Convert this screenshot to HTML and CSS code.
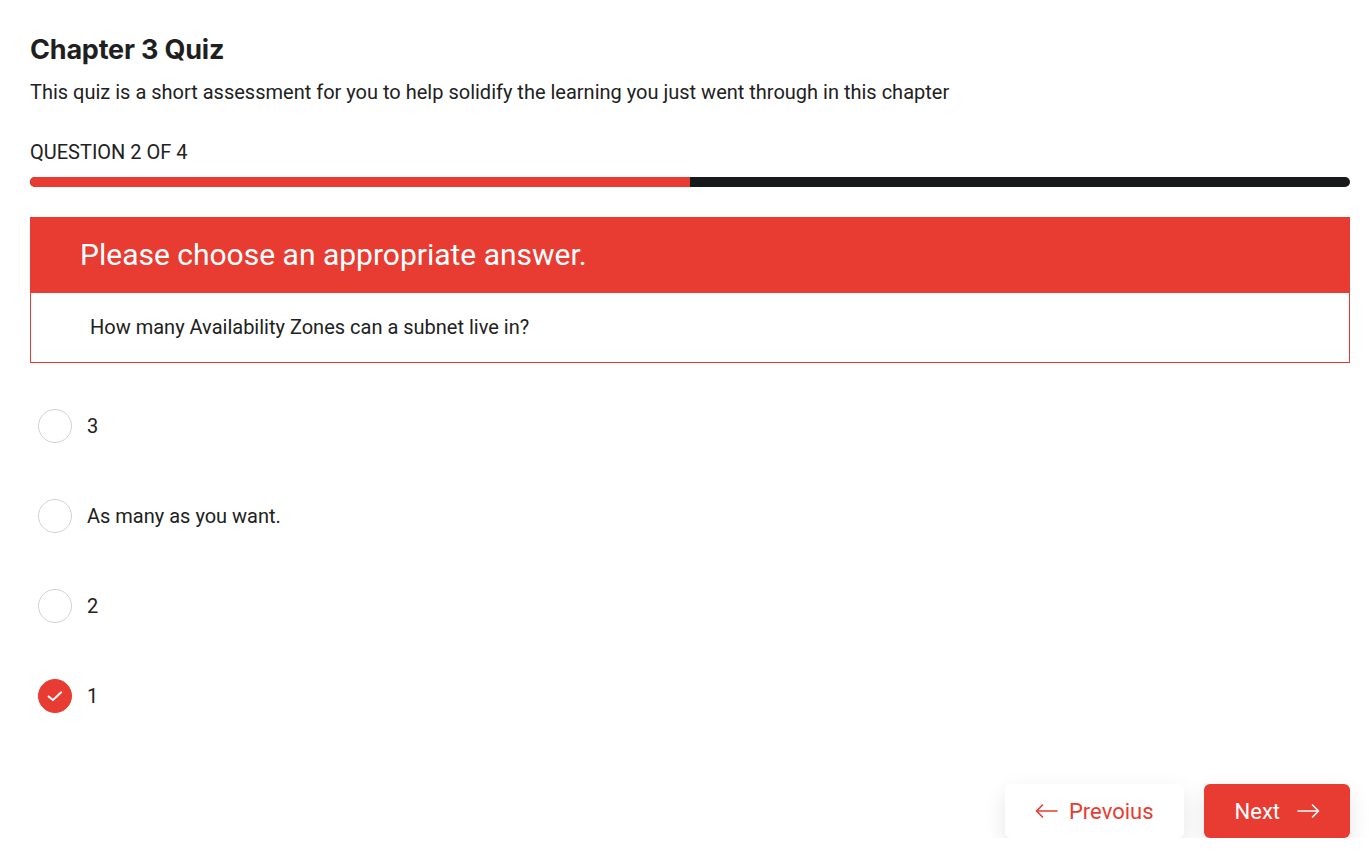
FILE: index.html
```html
<!DOCTYPE html>
<html>
<head>
<meta charset="utf-8">
<link rel="stylesheet" href="styles.css">
</head>
<body>
<div class="page">
  <h1 class="title">Chapter 3 Quiz</h1>
  <p class="subtitle">This quiz is a short assessment for you to help solidify the learning you just went through in this chapter</p>
  <div class="counter">QUESTION 2 OF 4</div>
  <div class="progress"><div class="progress-fill" style="width:50%"></div></div>
  <div class="card">
    <div class="card-head">Please choose an appropriate answer.</div>
    <div class="card-body">How many Availability Zones can a subnet live in?</div>
  </div>
  <ul class="options">
    <li class="option"><span class="radio"></span><span class="label">3</span></li>
    <li class="option"><span class="radio"></span><span class="label">As many as you want.</span></li>
    <li class="option"><span class="radio"></span><span class="label">2</span></li>
    <li class="option"><span class="radio checked"><svg width="18" height="18" viewBox="0 0 18 18"><path d="M2.6 9.4 L6.9 13.1 L15.2 5.2" fill="none" stroke="#fff" stroke-width="2" stroke-linecap="round" stroke-linejoin="round"/></svg></span><span class="label">1</span></li>
  </ul>
  <div class="actions">
    <button class="btn btn-prev"><svg width="23" height="14" viewBox="0 0 23 14"><path d="M22 7 H1.5 M7.5 1 L1.5 7 L7.5 13" fill="none" stroke="#e83c32" stroke-width="1.6" stroke-linecap="round" stroke-linejoin="round"/></svg><span>Prevoius</span></button>
    <button class="btn btn-next"><span>Next</span><svg width="23" height="14" viewBox="0 0 23 14"><path d="M1 7 H21.5 M15.5 1 L21.5 7 L15.5 13" fill="none" stroke="#fff" stroke-width="1.6" stroke-linecap="round" stroke-linejoin="round"/></svg></button>
  </div>
</div>
</body>
</html>
```

FILE: styles.css
```css
html, body {
  margin: 0;
  padding: 0;
  background: #ffffff;
}
body {
  font-family: Roboto, "Liberation Sans", sans-serif;
  color: #212121;
}
.page {
  padding: 33px 19px 0 30px;
}
.title {
  margin: 0;
  font-family: Inter, "Liberation Sans", sans-serif;
  font-weight: 700;
  font-size: 27px;
  line-height: 34px;
  color: #1f1f22;
  letter-spacing: -0.2px;
}
.subtitle {
  margin: 11px 0 0 0;
  font-size: 20px;
  line-height: 28px;
  color: #212121;
}
.counter {
  margin-top: 34px;
  font-size: 20px;
  line-height: 24px;
  color: #212121;
}
.progress {
  margin-top: 13px;
  height: 10px;
  border-radius: 5px;
  background: #18191b;
  overflow: hidden;
}
.progress-fill {
  height: 100%;
  background: #e83c32;
}
.card {
  margin-top: 30px;
  border: 1px solid #e83c32;
}
.card-head {
  background: #e83c32;
  color: #ffffff;
  font-size: 30px;
  line-height: 36px;
  padding: 19px 49px 20px;
}
.card-body {
  padding: 21px 59px 22px;
  font-size: 20px;
  line-height: 26px;
  color: #212121;
}
.options {
  list-style: none;
  margin: 46px 0 0 0;
  padding: 0 0 0 8px;
}
.option {
  display: flex;
  align-items: center;
  gap: 15px;
  height: 34px;
  margin-bottom: 56px;
}
.radio {
  width: 32px;
  height: 32px;
  border-radius: 50%;
  border: 1px solid #d2d2d2;
  display: flex;
  align-items: center;
  justify-content: center;
  flex: none;
}
.radio.checked {
  background: #e83c32;
  border-color: #e83c32;
}
.label {
  font-size: 20px;
  color: #212121;
}
.actions {
  display: flex;
  justify-content: flex-end;
  gap: 20px;
  margin-top: 71px;
}
.btn {
  height: 54px;
  border: none;
  border-radius: 6px;
  display: flex;
  align-items: center;
  gap: 11px;
  font-family: Roboto, "Liberation Sans", sans-serif;
  font-size: 22px;
  box-shadow: 0 8px 22px rgba(0, 0, 0, 0.1);
  cursor: pointer;
}
.btn-prev {
  background: #ffffff;
  color: #e83c32;
  padding: 0 30px 0 30px;
}
.btn-next {
  background: #e83c32;
  color: #ffffff;
  padding: 0 30px 0 31px;
  gap: 17px;
}
```
